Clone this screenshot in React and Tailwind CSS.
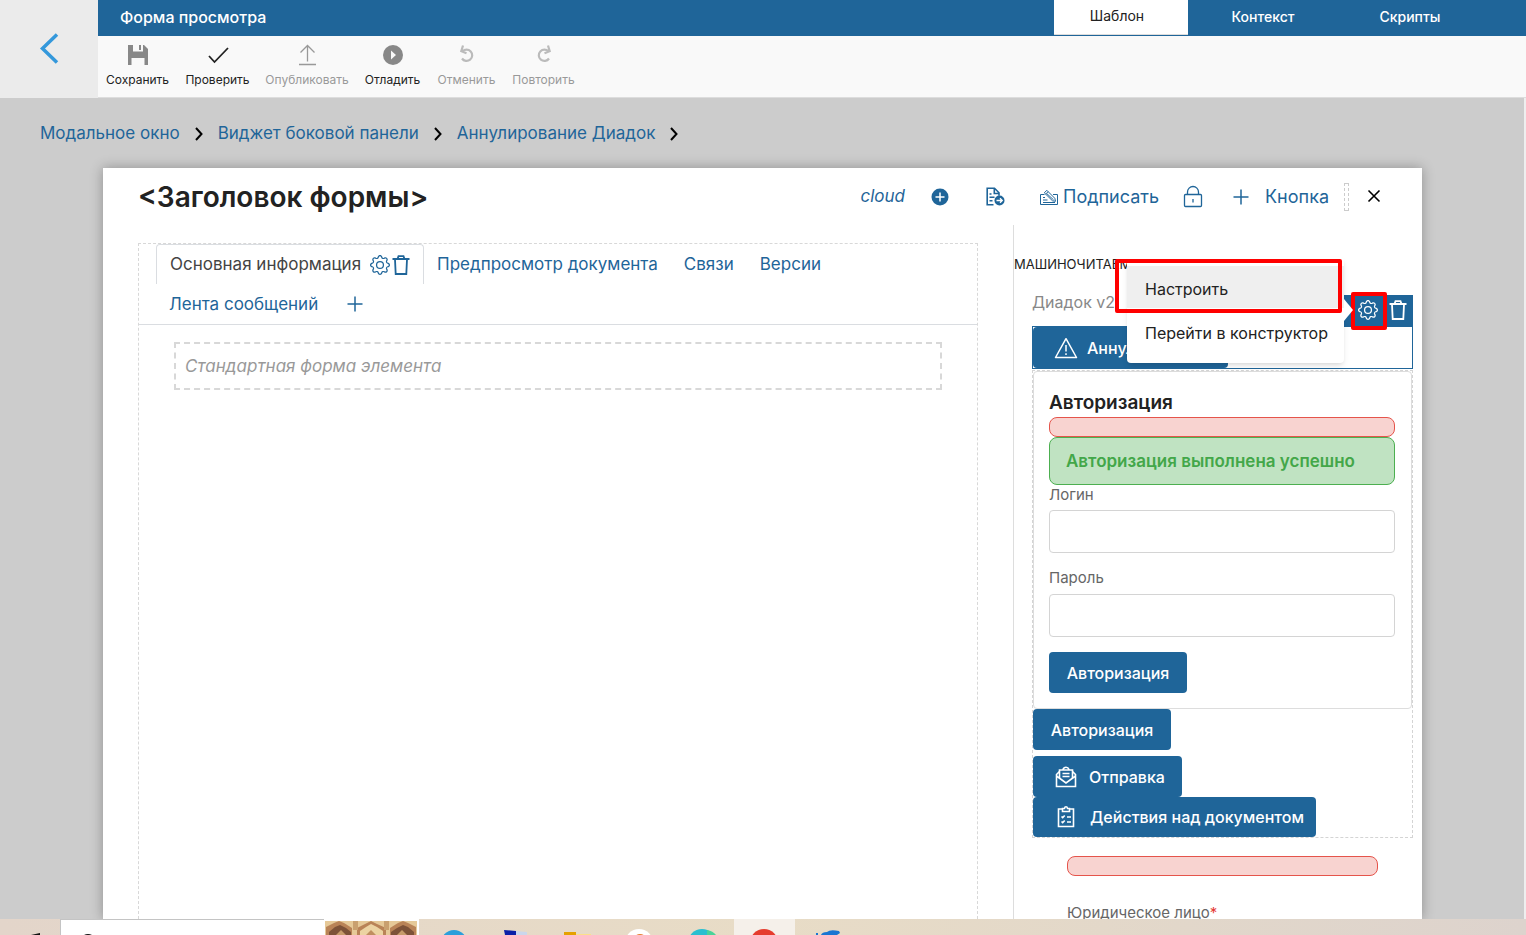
import React from "react";
import { BsGear } from "react-icons/bs";

function Stroke({ size = "size-6", width = 1.5, box = "0 0 24 24", children, className = "" }) {
  return (
    <svg
      viewBox={box}
      className={`${size} shrink-0 ${className}`}
      fill="none"
      stroke="currentColor"
      strokeWidth={width}
      aria-hidden="true"
    >
      {children}
    </svg>
  );
}

const SaveIcon = () => (
  <svg viewBox="0 0 24 24" className="size-6 text-[#888888]" fill="currentColor" aria-hidden="true">
    <path d="M2 2h5v6.500h10V2h1l4 4v16h-3.500v-7h-13v7H2z" />
    <path d="M13 2h2v5h-2z" />
  </svg>
);
const CheckIcon = () => (
  <Stroke width={1.800}>
    <path d="M3 13 8.500 19 22 5" />
  </Stroke>
);
const PublishIcon = () => (
  <Stroke width={1.3}>
    <path d="M12.500 18.500V3M5.500 9.500 12.500 2.500l7 7M4 21.500h17" />
  </Stroke>
);
const DebugIcon = () => (
  <svg viewBox="0 0 24 24" className="size-6 text-[#888888]" aria-hidden="true">
    <circle cx="12" cy="12" r="10" fill="currentColor" />
    <path d="M10 7.500v9l5-4.500z" fill="#f9f9f9" />
  </svg>
);
const UndoIcon = () => (
  <Stroke width={2.2} className="text-[#bbb]">
    <path d="M7.500 8.500A5.600 5.600 0 1 1 7 15.500M8 2.500 6.300 8.200 11.500 10.300" />
  </Stroke>
);
const RedoIcon = () => (
  <Stroke width={2.2} className="text-[#bbb]">
    <path d="M16.500 8.500A5.600 5.600 0 1 0 17 15.500M16 2.500 17.700 8.200 12.500 10.300" />
  </Stroke>
);
const TrashIcon = () => (
  <Stroke size="w-[18px] h-5" box="0 0 18 20" width={1.800}>
    <path d="M0.500 4h17M5.500 4l1-2.800h5l1 2.800M3 4.500 3.700 19h10.600L15 4.500" />
  </Stroke>
);
const PlusIcon = () => (
  <Stroke size="size-4" box="0 0 16 16" width={1.500}>
    <path d="M8 0.500v15M0.500 8h15" />
  </Stroke>
);
const Chevron = () => (
  <Stroke size="w-2 h-3.5" box="0 0 8 14" width={2} className="text-black">
    <path d="M1 1l5.500 6L1 13" />
  </Stroke>
);
const WarningIcon = () => (
  <Stroke size="size-6" width={1.500}>
    <path d="M12 2.700 22.500 21.500H1.500z" strokeLinejoin="round" />
    <path d="M12 9v6.500M12 17.300v1.700" />
  </Stroke>
);
const EnvelopeIcon = () => (
  <Stroke size="size-6" width={1.600}>
    <path d="M5.500 6.500 2.500 9.500v12h19v-12l-3-3M2.500 11l9.500 7 9.500-7" />
    <path d="M5.500 13V5h13v8M8.500 8.500h7M8.500 11.500h7M9 4.500c1-3 5-3 6 0" />
  </Stroke>
);
const ClipboardIcon = () => (
  <Stroke size="size-6" width={1.600}>
    <path d="M9 4H4.500v17.500h15V4H15" />
    <path d="M8.500 6.500v-3h2c.3-2.300 2.700-2.300 3 0h2v3z" />
    <path d="M7.500 11.500l1.200 1.200 2-2.200M13 12h4M7.500 16.500l1.200 1.200 2-2.200M13 17h4" />
  </Stroke>
);
const AddCircle = () => (
  <svg viewBox="0 0 18 18" className="size-[18px]" aria-hidden="true">
    <circle cx="9" cy="9" r="8.500" fill="currentColor" />
    <path d="M9 4.500v9M4.500 9h9" stroke="#fff" strokeWidth="1.500" />
  </svg>
);
const DocSendIcon = () => (
  <Stroke size="size-5" box="0 0 20 20" width={1.600}>
    <path d="M8.500 17.700H2.200V1.300h7.300l4.500 4.500v3M9.300 1.700V6.500h4.700M4.500 7h2M4.500 10.300h5M4.500 13.800h3" />
    <circle cx="14.500" cy="13.500" r="5" fill="currentColor" stroke="none" />
    <path d="M11.500 13.500h5.500M15 11.200l2.300 2.300-2.300 2.300" stroke="#fff" strokeWidth="1.300" />
  </Stroke>
);
const SignIcon = () => (
  <Stroke size="size-5" box="0 0 20 20" width={1}>
    <path d="M5.500 7.500h-4v10h17v-10h-4.500M4 15.500h12M4 13h4.500M4 10.500h2" />
    <path d="M5.300 5.800 7.800 3.300l8 8 .7 3-3-.5zM6.600 7.200l2.500-2.500M8 6.800l6.500 6" />
  </Stroke>
);
const LockIcon = () => (
  <Stroke size="w-5 h-6" box="0 0 20 24" width={1.300}>
    <rect x="1.500" y="9.500" width="17" height="12" rx="1" />
    <path d="M4.500 9.500V7a5.500 5.500 0 0 1 11 0v2.500M10 14v3.500" />
  </Stroke>
);

const tools = [
  { label: "Сохранить", icon: SaveIcon, width: "w-[79px]" },
  { label: "Проверить", icon: CheckIcon, width: "w-[81px]" },
  { label: "Опубликовать", icon: PublishIcon, width: "w-[98px]", off: true },
  { label: "Отладить", icon: DebugIcon, width: "w-[73px]" },
  { label: "Отменить", icon: UndoIcon, width: "w-[75px]", off: true },
  { label: "Повторить", icon: RedoIcon, width: "w-[79px]", off: true },
];

function Header() {
  return (
    <header className="flex h-[98px] shrink-0">
      <button aria-label="Назад" className="flex w-[98px] shrink-0 items-center justify-center bg-[#ebebeb] text-[#3498db]">
        <Stroke size="w-5 h-8" box="0 0 20 32" width={3.500}>
          <path d="M18 1.500 3.500 15.500l14.500 14" />
        </Stroke>
      </button>
      <div className="flex min-w-0 flex-1 flex-col">
        <div className="flex h-9 shrink-0 justify-between bg-[#1f6599] text-white">
          <h1 className="pl-[22px] text-base leading-[35px] font-medium">Форма просмотра</h1>
          <nav className="flex text-sm font-medium">
            <button className="h-[35px] w-[134px] border-b border-[#ddd] bg-white pr-2 pb-0.5 font-normal text-[#222]">Шаблон</button>
            <button className="h-[35px] w-[150px] pb-0.5">Контекст</button>
            <button className="mr-11 h-[35px] w-[144px] pb-0.5">Скрипты</button>
          </nav>
        </div>
        <div className="flex flex-1 border-b border-[#ddd] bg-[#f9f9f9]">
          {tools.map(({ label, icon: Icon, width, off }) => (
            <button
              key={label}
              disabled={off}
              className={`flex flex-col items-center gap-[5px] pt-[7px] text-xs ${width} ${off ? "text-[#999]" : "text-[#222]"}`}
            >
              <Icon />
              <span>{label}</span>
            </button>
          ))}
        </div>
      </div>
    </header>
  );
}

function Breadcrumbs() {
  return (
    <nav className="flex h-[70px] shrink-0 items-center gap-[15px] pt-[2px] pl-10 text-[17px] text-[#1f6599]">
      {["Модальное окно", "Виджет боковой панели", "Аннулирование Диадок"].map((t) => (
        <React.Fragment key={t}>
          <a href="#">{t}</a>
          <Chevron />
        </React.Fragment>
      ))}
    </nav>
  );
}

function ModalHeader() {
  return (
    <div className="flex h-[57px] shrink-0 items-center pr-[33px] pl-[35px] text-[#1f6599]">
      <h2 className="flex-1 text-[28px] font-semibold text-[#222]">&lt;Заголовок формы&gt;</h2>
      <span className="mr-[26px] text-[17px] italic">cloud</span>
      <button aria-label="Добавить" className="mr-9"><AddCircle /></button>
      <button aria-label="Отправить документ" className="mr-[34px]"><DocSendIcon /></button>
      <button className="mr-6 flex items-center gap-1 text-[18px]"><SignIcon />Подписать</button>
      <button aria-label="Заблокировать" className="mr-[30px]"><LockIcon /></button>
      <button className="flex items-center gap-4 text-[18px]"><PlusIcon />Кнопка</button>
      <span className="mr-[18px] ml-[15px] h-7 w-[5px] border border-dashed border-[#ccc]" />
      <button aria-label="Закрыть" className="pr-2 pb-0.5 text-black">
        <Stroke size="size-3.5" box="0 0 14 14" width={1.600}>
          <path d="M1.500 1.500l11 11M12.500 1.500l-11 11" />
        </Stroke>
      </button>
    </div>
  );
}

function TabsPane() {
  return (
    <section className="mt-[18px] ml-[35px] flex min-w-0 flex-1 flex-col border border-b-0 border-dashed border-[#d8d8d8]">
      <div className="flex flex-wrap border-b border-[#dadde1] px-[17px] text-[17px] text-[#1f6599]">
        <div className="flex h-10 items-center rounded-t border border-b-0 border-[#dadde1] px-[13px] text-[#444]">
          <button className="mr-[9px]">Основная информация</button>
          <button aria-label="Настроить вкладку" className="text-[#1f6599]"><BsGear className="size-5" /></button>
          <button aria-label="Удалить вкладку" className="ml-0.5 text-[#1f6599]"><TrashIcon /></button>
        </div>
        {["Предпросмотр документа", "Связи", "Версии"].map((t) => (
          <button key={t} className="h-10 px-[13px] pt-0.5">{t}</button>
        ))}
        <span className="w-full" />
        <button className="h-10 px-[13px] pt-0.5">Лента сообщений</button>
        <button aria-label="Добавить вкладку" className="h-10 px-4"><PlusIcon /></button>
      </div>
      <div className="mx-[35px] mt-[17px] flex h-12 items-center border-2 border-dashed border-[#d8d8d8] px-[9px] pt-0.5 text-[17px] text-[#999] italic">
        Стандартная форма элемента
      </div>
    </section>
  );
}

const button = "flex items-center rounded bg-[#1f6599] font-medium text-white";

function ContextMenu() {
  return (
    <div className="absolute -top-[70px] right-[68px] w-[217px] rounded bg-white pt-[9px] pb-[9px] shadow-md">
      <button className="block h-[42px] w-full bg-[#efefef] pt-[3px] pl-[18px] text-left">Настроить</button>
      <button className="block h-[46px] w-full pt-[3px] pl-[18px] text-left whitespace-nowrap">Перейти в конструктор</button>
      <svg viewBox="0 0 10 22" className="absolute top-[42px] left-full h-[22px] w-2.5 text-white" fill="currentColor" aria-hidden="true">
        <path d="M0 0l9 11-9 11z" />
      </svg>
      <span className="pointer-events-none absolute top-[2px] -left-[12px] h-[54px] w-[227px] rounded-xs border-4 border-[#f00]" />
    </div>
  );
}

function SidePanel() {
  return (
    <aside className="w-[409px] shrink-0 border-l border-[#ddd] text-base text-[#222]">
      <div className="pt-[29px] text-[13px] leading-5">МАШИНОЧИТАЕМ</div>
      <div className="mr-[9px] ml-[18px]">
        <div className="flex h-[52px] items-center pt-1 text-[#888]">Диадок v2</div>
        <div className="relative h-[43px] border border-[#1f6599]">
          <button className={`${button} h-[41px] w-[195px] gap-[9px] pl-[21px]`}>
            <WarningIcon />
            Аннулирование
          </button>
          <div className="absolute -right-px bottom-full flex h-8 w-[70px] items-center justify-end gap-[11px] bg-[#1f6599] pr-1.5 pb-0.5 text-white">
            <button aria-label="Настройки виджета"><BsGear className="size-5" /></button>
            <button aria-label="Удалить виджет"><TrashIcon /></button>
            <span className="pointer-events-none absolute -top-[3px] right-[26px] h-[38px] w-9 rounded-xs border-4 border-[#f00]" />
          </div>
          <ContextMenu />
        </div>
        <div className="mt-px border border-dashed border-[#d4d4d4]">
          <form className="rounded-sm border border-[#ddd] pt-[17px] pr-4 pb-[15px] pl-[15px]" onSubmit={(e) => e.preventDefault()}>
            <h3 className="text-[19px] leading-7 font-semibold">Авторизация</h3>
            <div className="h-5 rounded-lg border border-[#e5544b] bg-[#f8d3d0]" />
            <div className="h-12 rounded-lg border border-[#4caf50] bg-[#c0e3c2] pl-4 text-[17px] leading-[46px] font-semibold text-[#43a749]">
              Авторизация выполнена успешно
            </div>
            <label htmlFor="login" className="block h-[25px] text-[15px] leading-5 text-[#666]">Логин</label>
            <input id="login" className="block h-[43px] w-full rounded border border-[#d4d4d4] px-3" />
            <label htmlFor="password" className="block h-[41px] pt-[15px] text-[15px] leading-5 text-[#666]">Пароль</label>
            <input id="password" type="password" className="block h-[43px] w-full rounded border border-[#d4d4d4] px-3" />
            <button className={`${button} mt-[15px] h-[41px] w-[138px] justify-center`}>Авторизация</button>
          </form>
          <button className={`${button} mb-1.5 h-[41px] w-[138px] justify-center`}>Авторизация</button>
          <button className={`${button} h-[41px] w-[149px] gap-[11px] pl-[21px]`}><EnvelopeIcon />Отправка</button>
          <button className={`${button} h-10 w-[283px] gap-3 pl-[21px]`}><ClipboardIcon />Действия над документом</button>
        </div>
        <div className="mx-[35px] mt-[18px] h-5 rounded-lg border border-[#e5544b] bg-[#f8d3d0]" />
        <div className="mx-[35px] mt-[27px] text-[15px] leading-5 text-[#666]">
          Юридическое лицо<span className="text-[#e53935]">*</span>
        </div>
      </div>
    </aside>
  );
}

function Taskbar() {
  return (
    <footer className="flex h-4 shrink-0 overflow-hidden bg-linear-to-r from-[#e3d5ca] via-[#e8dcc6] to-[#ddd3cd]">
      <svg viewBox="0 0 60 16" className="h-4 w-[60px] shrink-0" aria-hidden="true">
        <path d="M31 16l9-2v2z" fill="#111" />
      </svg>
      <div className="w-[264px] shrink-0 border-t border-l border-[#c4c4c4] bg-white">
        <svg viewBox="0 0 264 15" className="h-[15px] w-[264px]" aria-hidden="true">
          <path d="M23 15q4-2 8 0z" fill="#111" />
        </svg>
      </div>
      <svg viewBox="0 0 95 16" className="h-4 w-[95px] shrink-0" aria-hidden="true">
        <path d="M0 0h95v16H0z" fill="#fff" />
        <path d="M1 2h92v14H1z" fill="#e6c998" />
        <path d="M2 16V8l8-4 5-2 5 2 8 5v7z" fill="#b98357" />
        <path d="M5 16v-3l6-5 5-2 6 3 5 4v3z" fill="#7d5238" />
        <path d="M12 16l5-5 5 5z" fill="#c79b6b" />
        <path d="M33 16V9l8-4 6-3 6 3 9 4v7z" fill="#b98357" />
        <path d="M36 16v-4l6-4 5-3 6 3 6 4v4z" fill="#ecd3a2" />
        <path d="M42 16l5-5 5 5z" fill="#c08f60" />
        <path d="M66 16V9l8-5 5-2 5 2 8 4v8z" fill="#b98357" />
        <path d="M67 16v-3l6-4 6-3 5 2 6 5v3z" fill="#7d5238" />
        <path d="M73 16l5-5 5 5z" fill="#c79b6b" />
        <path d="M29 2h5v9h-5zM60 2h5v9h-5z" fill="#c9a06f" />
      </svg>
      <svg viewBox="0 0 460 16" className="h-4 w-[460px] shrink-0" aria-hidden="true">
        <path d="M315 0h61v16h-61z" fill="#f5f0ea" />
        <circle cx="35" cy="24" r="13" fill="#2b9fdb" />
        <path d="M85 11l12 1v4H86z" fill="#0b20a8" />
        <path d="M97 12l11 1v3H97z" fill="#cbd7ec" />
        <path d="M145 13h12v3h-12z" fill="#e5a100" />
        <path d="M157 15h15v1h-15z" fill="#fbe08a" />
        <circle cx="220" cy="24" r="14" fill="#fff" />
        <circle cx="221" cy="22" r="7" fill="#e77d2d" />
        <circle cx="283" cy="24" r="14" fill="#2bbfd0" />
        <path d="M288 11q6 1 9 5h-9z" fill="#49d39a" />
        <circle cx="345" cy="24" r="14" fill="#e53c2e" />
        <path d="M402 16q1-3 6-3 3-3 12-1l1 2-3 2z" fill="#1976d2" />
        <path d="M397 14h2v2h-2z" fill="#1976d2" />
      </svg>
    </footer>
  );
}

export default function App() {
  return (
    <div className="flex h-screen flex-col overflow-hidden font-['Inter','Liberation_Sans',sans-serif]">
      <Header />
      <main className="flex min-h-0 flex-1 flex-col overflow-hidden border-r-2 border-[#eee] bg-[#ccc]">
        <Breadcrumbs />
        <div className="mr-[102px] ml-[103px] flex min-h-0 flex-1 flex-col bg-white shadow-[0_0_12px_rgba(0,0,0,0.3)]">
          <ModalHeader />
          <div className="flex min-h-0 flex-1 gap-[35px]">
            <TabsPane />
            <SidePanel />
          </div>
        </div>
      </main>
      <Taskbar />
    </div>
  );
}
